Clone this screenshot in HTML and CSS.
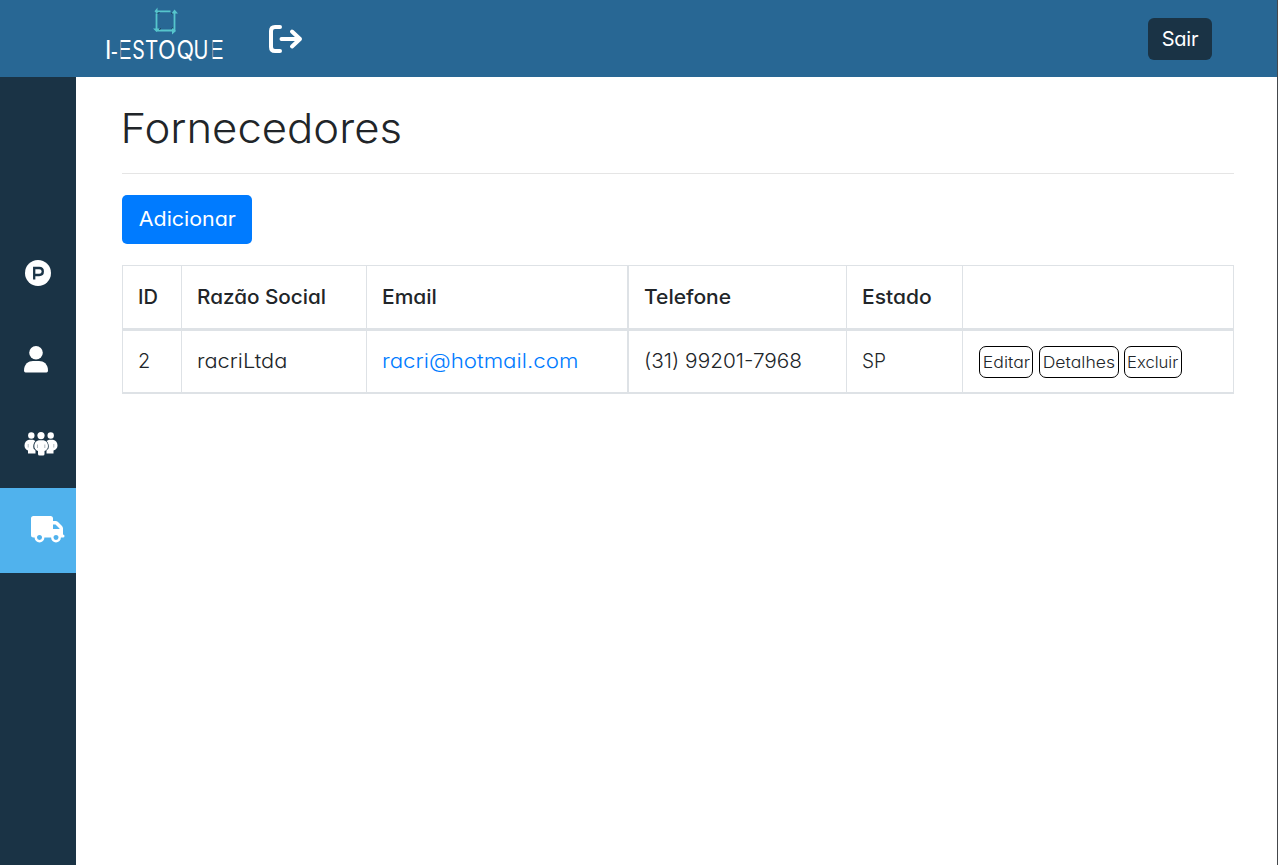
FILE: index.html
```html
<!DOCTYPE html>
<html lang="pt-BR">
<head>
<meta charset="utf-8">
<title>Fornecedores</title>
<link rel="stylesheet" href="styles.css">
</head>
<body>
<header class="topbar">
  <div class="logo">
    <svg class="logo-mark" width="30" height="30" viewBox="0 0 30 30" fill="none" stroke="#56c5cc" stroke-width="1.8">
      <path d="M20.500 6.300H6M6.500 8.500V25M6.500 25.500H22M24.500 26V7"/>
      <path d="M7.500 2.500L4.500 6.300L7.500 9.500ZM21.500 8.500L24.500 4.500L28 8.500ZM3 23.500L6.500 27L10 23.500ZM22 22.500L26 26L22 29.500Z" fill="#56c5cc" stroke="none"/>
      <path d="M7.500 8.500l2-1M21 8l1.500 1M9 24.500l2-1M21.500 23.500l1.500-1" stroke="#1b4055" stroke-width="1"/>
    </svg>
    <div class="logo-text"><span class="l-i">I</span><span class="l-dash">-</span><span class="l-e">E</span><span class="l-s">S</span><span class="l-t">T</span><span class="l-o">O</span><span class="l-q">Q</span><span class="l-u">U</span><span class="l-e">E</span></div>
  </div>
  <svg class="exit" width="36" height="30" viewBox="0 0 36 30" fill="none" stroke="#fff" stroke-width="4" stroke-linecap="round" stroke-linejoin="round">
    <path d="M13 3H8Q4 3 4 7V23Q4 27 8 27H13M14.500 15H33M25 7.500L33 15L25 22.500"/>
  </svg>
  <button class="logout">Sair</button>
</header>
<div class="shell">
  <nav class="sidebar">
    <a class="item"><svg class="i-product" width="26" height="26" viewBox="0 0 26 26"><circle cx="13" cy="13" r="13" fill="#fff"/><path d="M9.200 19.500V8H14.200Q17.800 8 17.800 11.500T14.200 15H10" fill="none" stroke="#1b3447" stroke-width="2.300"/></svg></a>
    <a class="item"><svg class="i-user" width="24" height="28" viewBox="0 0 24 28" fill="#fff"><circle cx="12" cy="6.800" r="6.800"/><path d="M0 24.500C0 18 4.500 15 9 15H15C19.500 15 24 18 24 24.500Q24 26.500 22.500 26.500H1.500Q0 26.500 0 24.500Z"/></svg></a>
    <a class="item"><svg class="i-group" width="34" height="24" viewBox="0 0 34 24" fill="#fff">
      <circle cx="7.300" cy="3.500" r="3.200"/><circle cx="26.700" cy="3.500" r="3.200"/>
      <path d="M5 7.800H9L11.500 9Q8.500 12 9.500 16.500L11.500 18.500V21.500H4V18.500Q.5 17 .5 13.500Q.5 9 5 7.800Z"/>
      <path d="M29 7.800H25L22.500 9Q25.500 12 24.500 16.500L22.500 18.500V21.500H29.500V18.500Q33.500 17 33.500 13.500Q33.500 9 29 7.800Z"/>
      <circle cx="17" cy="3.600" r="3.600"/>
      <path d="M14.800 8.200H19.500Q24 9.500 24 14Q24 17.500 20.500 19V22Q20.500 23.500 19 23.500H15.500Q14 23.500 14 22V19Q10.300 17.500 10.300 14Q10.300 9.500 14.800 8.200Z"/>
      <path d="M4.200 12V15.500M29.800 12V15.500M13.500 12.500V16M20.800 12.500V16" stroke="#1b3447" stroke-opacity=".4" stroke-width=".9"/></svg></a>
    <a class="item active"><svg class="i-truck" width="34" height="28" viewBox="0 0 34 28">
      <path fill="#fff" fill-rule="evenodd" d="M2.500 0H19.500Q22 0 22 2.500V5H24.500Q26 5 27 6L31 10Q32 11 32 12.500V18.500Q33.500 18.500 33.500 20T32 21.500H2.500Q0 21.500 0 19V2.500Q0 0 2.500 0ZM22 8.500V13H28.500V12.500L24.500 8.500Z"/>
      <circle cx="8.500" cy="21.500" r="3.700" fill="#50b2ed" stroke="#fff" stroke-width="2.400"/><circle cx="25" cy="21.500" r="3.700" fill="#50b2ed" stroke="#fff" stroke-width="2.400"/></svg></a>
  </nav>
  <main class="content">
    <h1 class="title"><span class="t-title">Fornecedores</span></h1>
    <button class="add"><span class="t-add">Adicionar</span></button>
    <table class="grid">
      <colgroup><col class="c1"><col class="c2"><col class="c3"><col class="c4"><col class="c5"><col class="c6"></colgroup>
      <thead><tr><th>ID</th><th><span class="t-razao">Razão Social</span></th><th><span class="t-email">Email</span></th><th class="thick"><span class="t-email">Telefone</span></th><th><span class="t-email">Estado</span></th><th></th></tr></thead>
      <tbody><tr><td>2</td><td><span class="t-racri">racriLtda</span></td><td><a class="mail">racri@hotmail.com</a></td><td class="thick"><span class="t-phone">(31) 99201-7968</span></td><td><span class="t-sp">SP</span></td>
      <td><div class="actions"><a class="act w1"><span class="t-edit">Editar</span></a><a class="act w2"><span class="t-edit">Detalhes</span></a><a class="act w3"><span class="t-del">Excluir</span></a></div></td></tr></tbody>
    </table>
  </main>
</div>
</body>
</html>
```
FILE: styles.css
```css
* { box-sizing: border-box; }
body {
  margin: 0;
  height: 865px;
  overflow: hidden;
  border-right: 1px solid #45484b;
  font-family: Inter, "Open Sans", sans-serif;
  font-feature-settings: "cv11", "ss03";
  font-weight: 300;
  font-size: 20px;
  color: #212529;
  background: #fff;
}
button { font: inherit; font-feature-settings: inherit; border: 0; padding: 0; color: #fff; }
.topbar { display: flex; height: 77px; background: #286794; padding: 0 65px 0 106px; }
.logo { width: 118px; padding-top: 5px; }
.logo-mark { display: block; margin-left: 44px; }
.logo-text { display: flex; width: 120px; height: 30px; line-height: 30px; font-size: 25px; font-weight: 400; color: #fff; }
.logo-text span { display: flex; flex: none; justify-content: center; }
.l-i { width: 4.5px; transform: scaleX(.7); font-weight: 600; }
.l-dash { width: 6.5px; transform: translateY(2px) scaleX(.62); }
.l-e { width: 15px; transform: translateX(-.5px) scaleX(1.1); clip-path: inset(0 0 0 4.400px); }
.l-s { width: 13px; transform: scaleX(.78); }
.l-t { width: 13px; transform: scaleX(.82); }
.l-o { width: 17.500px; transform: scaleX(.92); }
.l-q { width: 18.500px; transform: scaleX(.92); }
.l-u { width: 15px; transform: translateX(-.5px) scaleX(.8); }
.exit { margin: 24px 0 0 43px; }
.logout { width: 64px; height: 42px; margin: 18px 0 0 auto; padding-bottom: 1px; background: #1a3345; border-radius: 6px; font-weight: 400; letter-spacing: -.2px; }
.shell { display: flex; height: 788px; }
.sidebar { width: 76px; flex: none; background: #1a3345; padding-top: 156px; }
.item { display: flex; height: 85px; align-items: flex-start; }
.active { background: #50b2ed; }
.i-product { margin: 27px 0 0 25px; }
.i-user { margin: 28px 0 0 24px; }
.i-group { margin: 29px 0 0 24px; }
.i-truck { margin: 28px 0 0 31px; }
.content { flex: 1; padding: 21px 43px 0 46px; }
.title { margin: 0 0 21px; height: 76px; border-bottom: 1px solid #e5e5e5; font-size: 41px; font-weight: 300; line-height: 60px; }
.title span, th span, td span, .mail { display: inline-block; transform-origin: left; }
.t-title { transform: translate(-1.500px, -.5px) scaleX(1.064); }
.add { display: block; width: 130px; height: 49px; padding-bottom: 2px; background: #007bff; border-radius: 5px; font-weight: 400; }
.t-add { display: inline-block; transform: scaleX(1.07); }
.grid { width: 1112px; margin-top: 21px; table-layout: fixed; border-spacing: 0; border-right: 1px solid #dee2e6; }
.c1 { width: 59px; } .c2 { width: 185px; } .c3 { width: 261px; }
.c4 { width: 219px; } .c5 { width: 116px; } .c6 { width: 271px; }
th, td { padding: 0 0 0 15px; text-align: left; border-left: 1px solid #dee2e6; white-space: nowrap; }
th { height: 66px; border-top: 1px solid #dee2e6; border-bottom: 3px solid #dee2e6; font-weight: 500; }
td { height: 63px; padding-bottom: 2px; border-bottom: 2px solid #dee2e6; font-weight: 300; }
.thick { border-left-width: 2px; }
.t-razao { transform: scaleX(1.035); }
.t-email { transform: scaleX(1.05); }
.t-racri { transform: scaleX(1.09); }
.t-phone { transform: scaleX(1.04); }
.t-sp { transform: scaleX(.95); }
.mail { color: #007bff; transform: scaleX(1.115); }
.actions { display: flex; }
.act { height: 32px; line-height: 30px; border: 1px solid #000; border-radius: 7px; font-size: 16px; text-align: center; margin: 2px 0 0; }
.act span { transform-origin: center; }
.w1 { width: 54px; margin-left: 1px; } .w2 { width: 80px; margin-left: 6px; } .w3 { width: 58px; margin-left: 5px; }
.t-edit { transform: scaleX(1.1); }
.t-del { transform: scaleX(1.04); }
```
